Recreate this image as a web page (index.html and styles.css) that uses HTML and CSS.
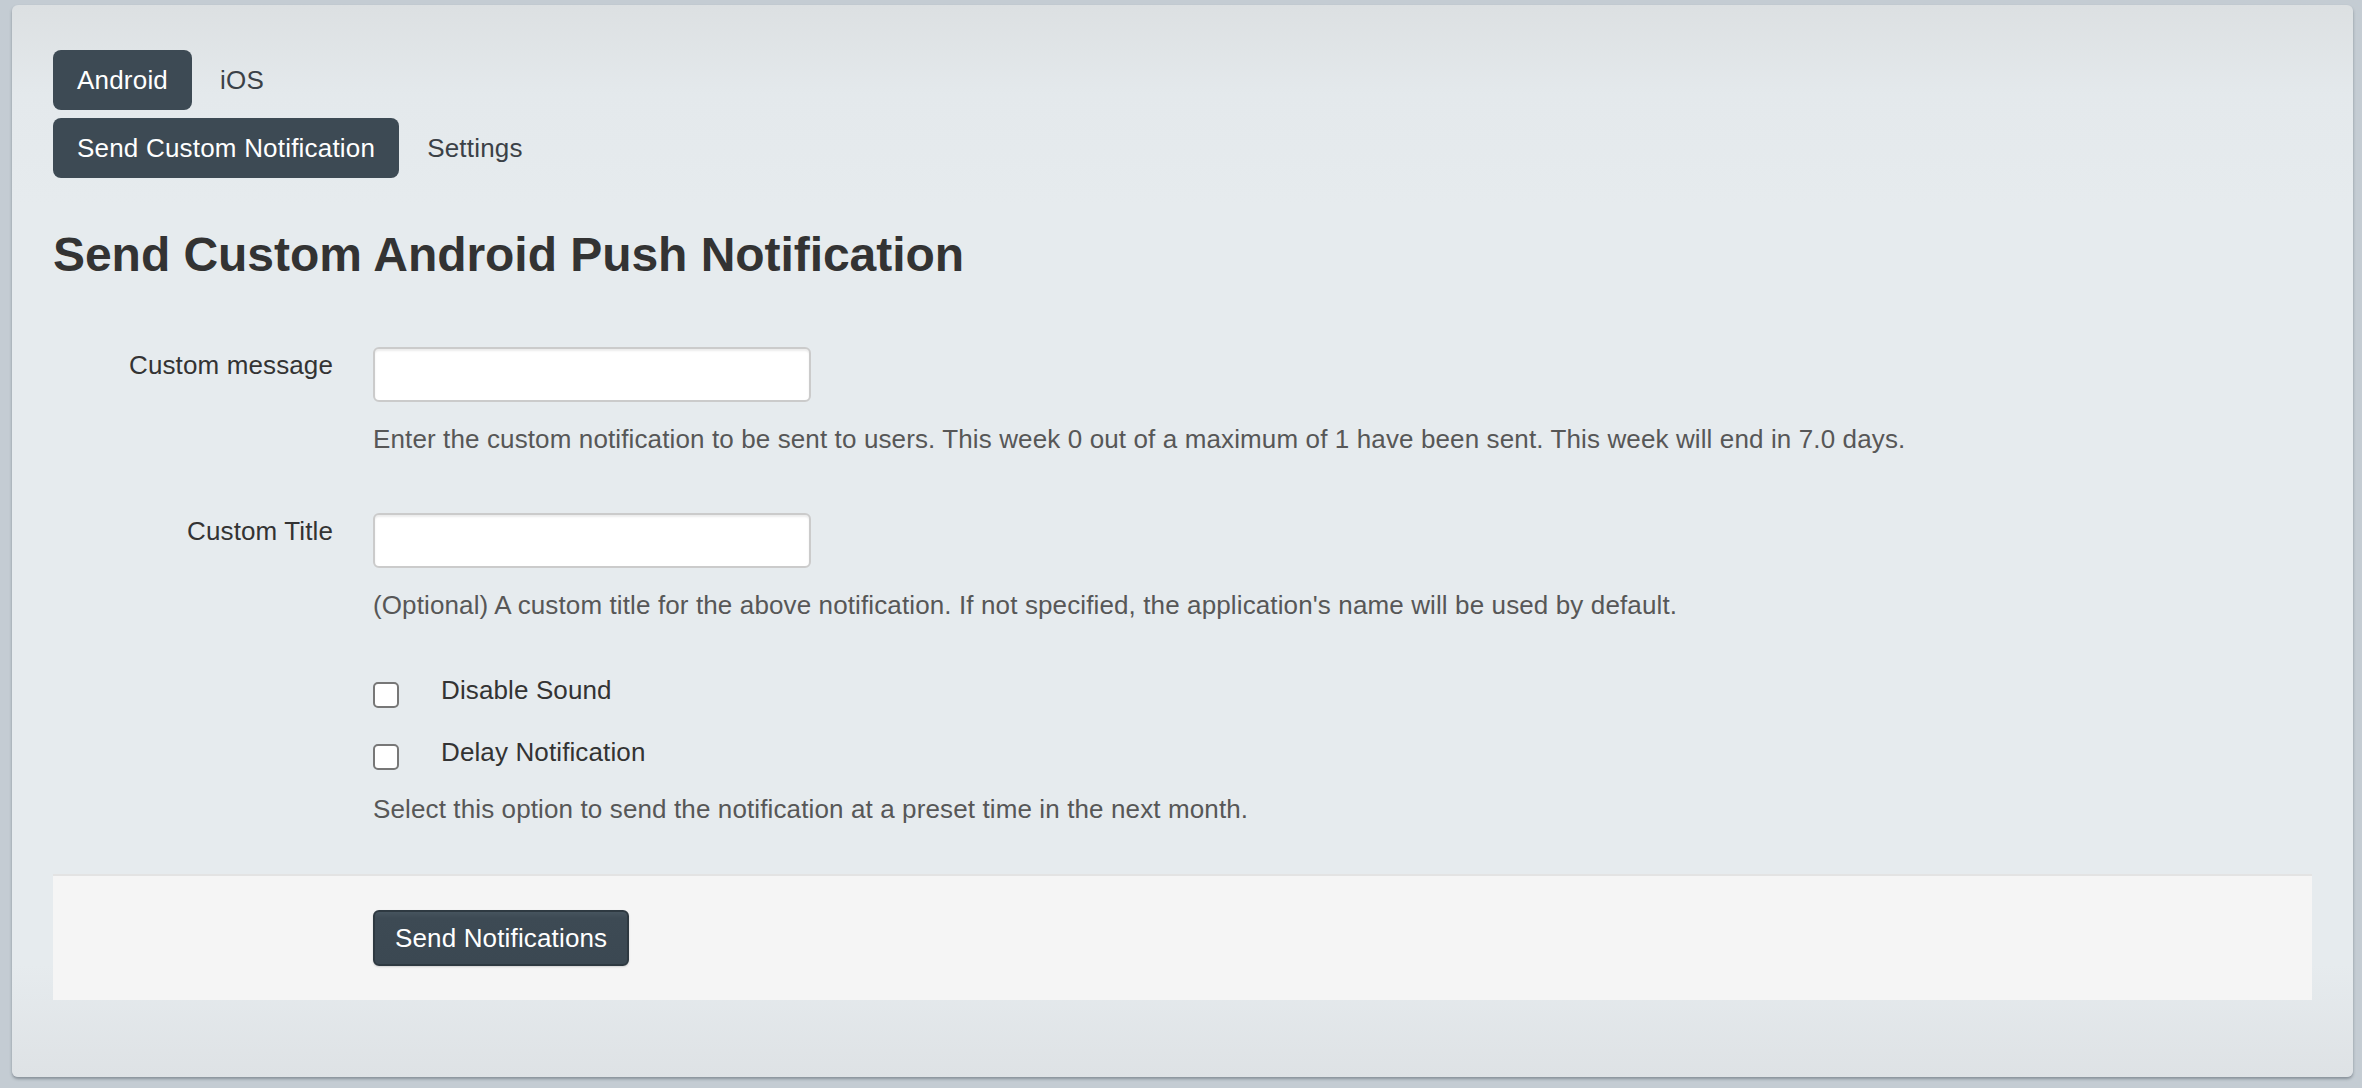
FILE: index.html
```html
<!DOCTYPE html>
<html lang="en">
<head>
<meta charset="utf-8">
<title>Send Custom Android Push Notification</title>
<link rel="stylesheet" href="styles.css">
</head>
<body>
<div class="panel">
  <ul class="pills">
    <li><a class="pill active" href="#">Android</a></li>
    <li><a class="pill" href="#">iOS</a></li>
  </ul>
  <ul class="pills">
    <li><a class="pill active" href="#">Send Custom Notification</a></li>
    <li><a class="pill" href="#">Settings</a></li>
  </ul>
  <h1 class="title">Send Custom Android Push Notification</h1>
  <form class="form">
    <div class="group">
      <label class="label" for="msg">Custom message</label>
      <div class="controls">
        <input class="text-input" id="msg" type="text">
        <p class="help">Enter the custom notification to be sent to users. This week 0 out of a maximum of 1 have been sent. This week will end in 7.0 days.</p>
      </div>
    </div>
    <div class="group group-title">
      <label class="label" for="title">Custom Title</label>
      <div class="controls">
        <input class="text-input" id="title" type="text">
        <p class="help">(Optional) A custom title for the above notification. If not specified, the application's name will be used by default.</p>
      </div>
    </div>
    <div class="group checks">
      <div class="label"></div>
      <div class="controls">
        <label class="check"><span class="box"></span><span>Disable Sound</span></label>
        <label class="check"><span class="box"></span><span>Delay Notification</span></label>
        <p class="help">Select this option to send the notification at a preset time in the next month.</p>
      </div>
    </div>
    <div class="actions">
      <button class="btn" type="button">Send Notifications</button>
    </div>
  </form>
</div>
</body>
</html>
```
FILE: styles.css
```css
html, body {
  margin: 0;
  padding: 0;
}
body {
  background: #c4ccd3;
  font-family: "Liberation Sans", Arial, Helvetica, sans-serif;
  color: #333;
  font-size: 26px;
  letter-spacing: 0.12px;
  height: 1088px;
  overflow: hidden;
}
.panel {
  box-sizing: border-box;
  margin: 5px 0 0 12px;
  width: 2341px;
  height: 1072px;
  padding: 45px 41px 0 41px;
  border-radius: 6px;
  background:
    radial-gradient(ellipse 120% 110% at 50% 45%, rgba(255,255,255,0) 70%, rgba(0,0,0,0.05) 100%),
    linear-gradient(#dce0e2 0px, #e4e9ec 90px, #e6ebee 200px, #e6ebee 960px, #dee2e5 1072px);
  box-shadow: 0 2px 3px rgba(60,70,80,0.45);
}
.pills {
  list-style: none;
  margin: 0 0 8px 0;
  padding: 0;
  display: flex;
  gap: 4px;
}
.pill {
  display: block;
  height: 60px;
  line-height: 60px;
  padding: 0 24px;
  border-radius: 8px;
  color: #3b4147;
  text-decoration: none;
  letter-spacing: 0.2px;
}
.pill.active {
  background: #3d4a54;
  color: #fff;
}
.title {
  margin: 48px 0 0 0;
  font-size: 48px;
  line-height: 58px;
  font-weight: bold;
  color: #333;
  letter-spacing: -0.05px;
}
.form {
  margin-top: 63px;
}
.group {
  display: grid;
  grid-template-columns: 280px 1fr;
  column-gap: 40px;
  margin-bottom: 56px;
}
.group.group-title {
  margin-bottom: 49px;
}
.label {
  text-align: right;
  line-height: 36px;
  color: #333;
}
.controls {
  display: flex;
  flex-direction: column;
  align-items: flex-start;
}
.text-input {
  box-sizing: border-box;
  width: 438px;
  height: 55px;
  margin: 0;
  border: 2px solid #cbcbcb;
  border-radius: 6px;
  background: #fff;
  box-shadow: inset 0 2px 2px rgba(0,0,0,0.08);
}
.help {
  margin: 19px 0 0 0;
  line-height: 36px;
  color: #575757;
}
.group.checks {
  margin-bottom: 47px;
}
.check {
  display: flex;
  align-items: flex-start;
  height: 36px;
  line-height: 36px;
  margin-bottom: 26px;
  color: #333;
}
.box {
  box-sizing: border-box;
  width: 26px;
  height: 26px;
  margin: 10px 42px 0 0;
  border: 2px solid #777;
  border-radius: 5px;
  background: #fff;
}
.group.checks .help {
  margin-top: -5px;
}
.actions {
  border-top: 2px solid #e3e3e3;
  background: #f5f5f5;
  height: 126px;
  box-sizing: border-box;
  padding: 34px 0 0 320px;
}
.btn {
  height: 56px;
  padding: 0 20px;
  border: 2px solid #2e3941;
  border-radius: 6px;
  background: linear-gradient(#46545e 0px, #3d4a54 6px, #3b4852 100%);
  color: #fff;
  font-family: "Liberation Sans", Arial, Helvetica, sans-serif;
  font-size: 26px;
  letter-spacing: 0.15px;
  box-shadow: 0 1px 2px rgba(0,0,0,0.15);
}
```
